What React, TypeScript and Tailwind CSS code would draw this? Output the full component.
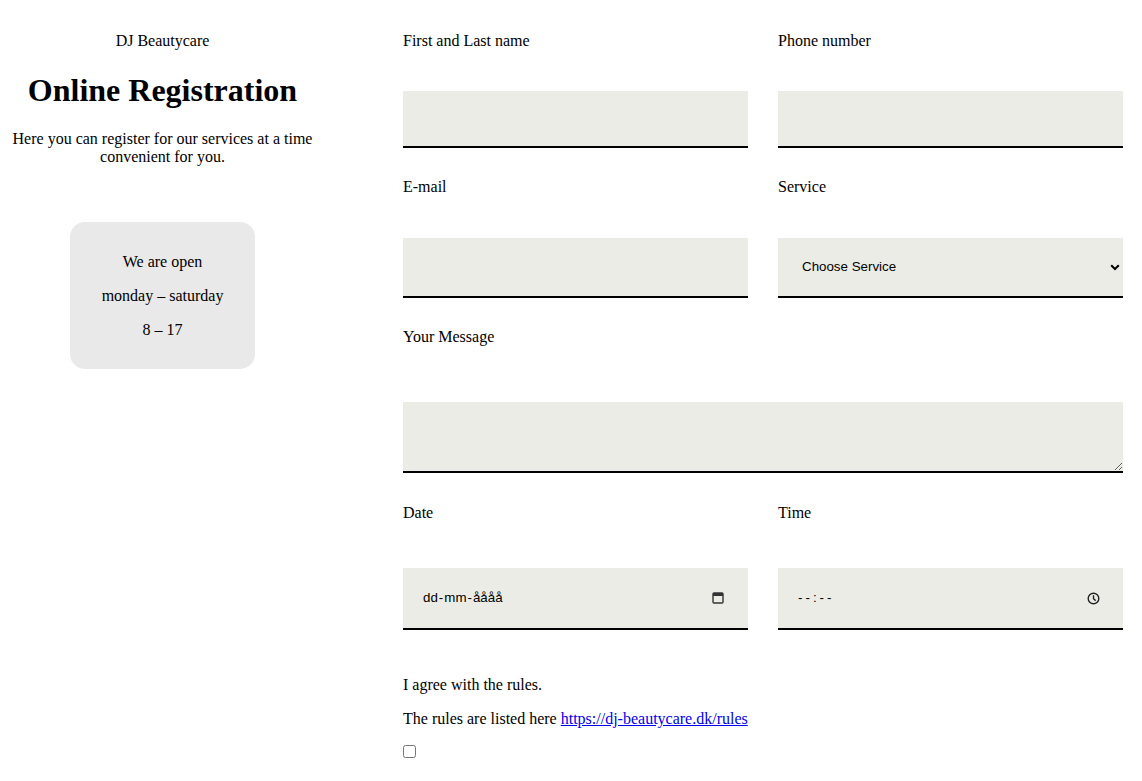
import React from "react";

const serif = "font-['Liberation_Serif',_'Times_New_Roman',_serif]";
const sans = "font-['Liberation_Sans',_Arial,_sans-serif]";

function Label({ children, className = "" }: { children: React.ReactNode; className?: string }) {
  return <label className={`block text-[16px] leading-[18px] ${className}`}>{children}</label>;
}

function CalendarIcon() {
  return (
    <svg width="12" height="12" viewBox="0 0 12 12" aria-hidden="true">
      <rect x="1" y="1" width="10" height="10" rx="1" fill="none" stroke="#333" strokeWidth="1.4" />
      <rect x="1" y="1" width="10" height="3" fill="#333" />
    </svg>
  );
}

function ClockIcon() {
  return (
    <svg width="13" height="13" viewBox="0 0 13 13" aria-hidden="true">
      <circle cx="6.5" cy="6.5" r="5.3" fill="none" stroke="#222" strokeWidth="1.4" />
      <path d="M6.5 3.3V6.7L8.7 8.6" fill="none" stroke="#222" strokeWidth="1.4" />
    </svg>
  );
}

export default function App() {
  return (
    <div className={`${serif} flex min-h-[781px] bg-white text-black`}>
      {/* left intro column */}
      <aside className="w-[325px] shrink-0 pt-8 text-center">
        <p className="text-[16px] leading-[18px]">DJ Beautycare</p>
        <h1 className="mt-[22px] text-[32px] font-bold leading-[37px]">Online Registration</h1>
        <p className="mt-[21px] px-2 text-[16px] leading-[18px]">
          Here you can register for our services at a time convenient for you.
        </p>
        <div className="mx-auto mt-[56px] w-[185px] rounded-[15px] bg-[#e9e9e9] pt-[31px] pb-[30px] text-[16px] leading-[18px]">
          <p>We are open</p>
          <p className="mt-4">monday – saturday</p>
          <p className="mt-4">8 – 17</p>
        </div>
      </aside>

      {/* form */}
      <form className="ml-[78px] w-[720px] pt-8">
        <div className="grid grid-cols-2 gap-x-[30px]">
          <div>
            <Label>First and Last name</Label>
            <input className="mt-[41px] block h-[57px] w-full border-b-2 border-black bg-[#ecece7] px-5 outline-none" />
          </div>
          <div>
            <Label>Phone number</Label>
            <input className="mt-[41px] block h-[57px] w-full border-b-2 border-black bg-[#ecece7] px-5 outline-none" />
          </div>

          <div className="mt-[30px]">
            <Label>E-mail</Label>
            <input className="mt-[42px] block h-[60px] w-full border-b-2 border-black bg-[#ecece7] px-5 outline-none" />
          </div>
          <div className="mt-[30px]">
            <Label>Service</Label>
            <div className="relative mt-[42px]">
              <select className={`${sans} block h-[60px] w-full appearance-none border-b-2 border-black bg-[#ecece7] pl-6 text-[13.33px] text-black outline-none`}>
                <option>Choose Service</option>
              </select>
              <svg className="pointer-events-none absolute right-[3px] top-[26px]" width="10" height="7" viewBox="0 0 10 7" aria-hidden="true">
                <path d="M1.2 1.2L5 5L8.8 1.2" fill="none" stroke="#000" strokeWidth="2" />
              </svg>
            </div>
          </div>
        </div>

        <div className="mt-[30px]">
          <Label>Your Message</Label>
          <textarea className="mt-[56px] block h-[71px] w-full border-b-2 border-black bg-[#ecece7] px-5 outline-none" />
        </div>

        <div className="mt-[31px] grid grid-cols-2 gap-x-[30px]">
          <div>
            <Label>Date</Label>
            <div className={`${sans} mt-[46px] flex h-[62px] items-center justify-between border-b-2 border-black bg-[#ecece7] pl-5 pr-6 text-[13.33px]`}>
              <span>
                dd<span className="mx-[1px]">-</span>mm<span className="mx-[1px]">-</span>åååå
              </span>
              <CalendarIcon />
            </div>
          </div>
          <div>
            <Label>Time</Label>
            <div className={`${sans} mt-[46px] flex h-[62px] items-center justify-between border-b-2 border-black bg-[#ecece7] pl-5 pr-[23px] text-[13.33px]`}>
              <span className="tracking-[3px]">--:--</span>
              <ClockIcon />
            </div>
          </div>
        </div>

        <p className="mt-[46px] text-[16px] leading-[18px]">I agree with the rules.</p>
        <p className="mt-4 text-[16px] leading-[18px]">
          The rules are listed here{" "}
          <a href="#" className="text-[#0000ee] underline">
            https://dj-beautycare.dk/rules
          </a>
        </p>
        <input type="checkbox" className="mt-[17px] block h-[13px] w-[13px]" />
      </form>
    </div>
  );
}
